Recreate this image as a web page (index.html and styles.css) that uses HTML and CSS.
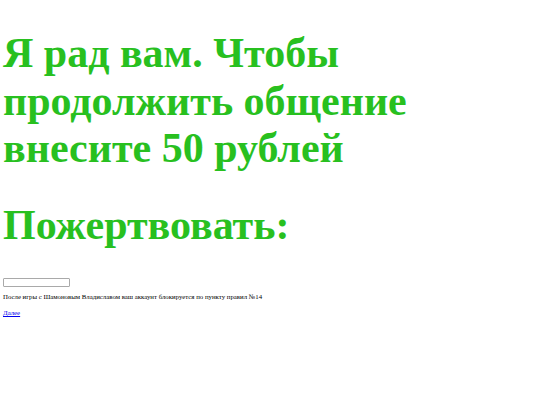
FILE: index.html
```html
<!DOCTYPE html>
<html lang="ru">
<head>
<meta charset="utf-8">
<link rel="stylesheet" href="styles.css">
</head>
<body>
<h1 class="title">Я рад вам. Чтобы продолжить общение внесите 50 рублей</h1>
<h1 class="title donate">Пожертвовать:</h1>
<input class="field" type="text">
<p class="note">После игры с Шамоновым Владиславом ваш аккаунт блокируется по пункту правил №14</p>
<a class="next" href="#">Далее</a>
</body>
</html>
```

FILE: styles.css
```css
html, body {
  background: #ffffff;
}
body {
  margin: 0;
  padding: 0 3px;
  font-family: "Liberation Serif", serif;
}
.title {
  margin: 30px 0 0;
  width: 440px;
  font-family: "Liberation Serif", serif;
  font-weight: bold;
  font-size: 42px;
  line-height: 47.5px;
  color: #28c01f;
}
.donate {
  margin-top: 29px;
}
.field {
  display: block;
  margin: 29px 0 0;
  width: 67px;
  height: 9px;
  box-sizing: border-box;
  padding: 0;
  border: 1px solid #a9a9a9;
  border-radius: 1px;
  background: #fff;
}
.note {
  margin: 5px 0 0;
  font-size: 6.8px;
  line-height: 9px;
  color: #000;
}
.next {
  display: inline-block;
  margin-top: 1px;
  font-size: 6.8px;
  line-height: 9px;
  color: #0000ee;
}
```
